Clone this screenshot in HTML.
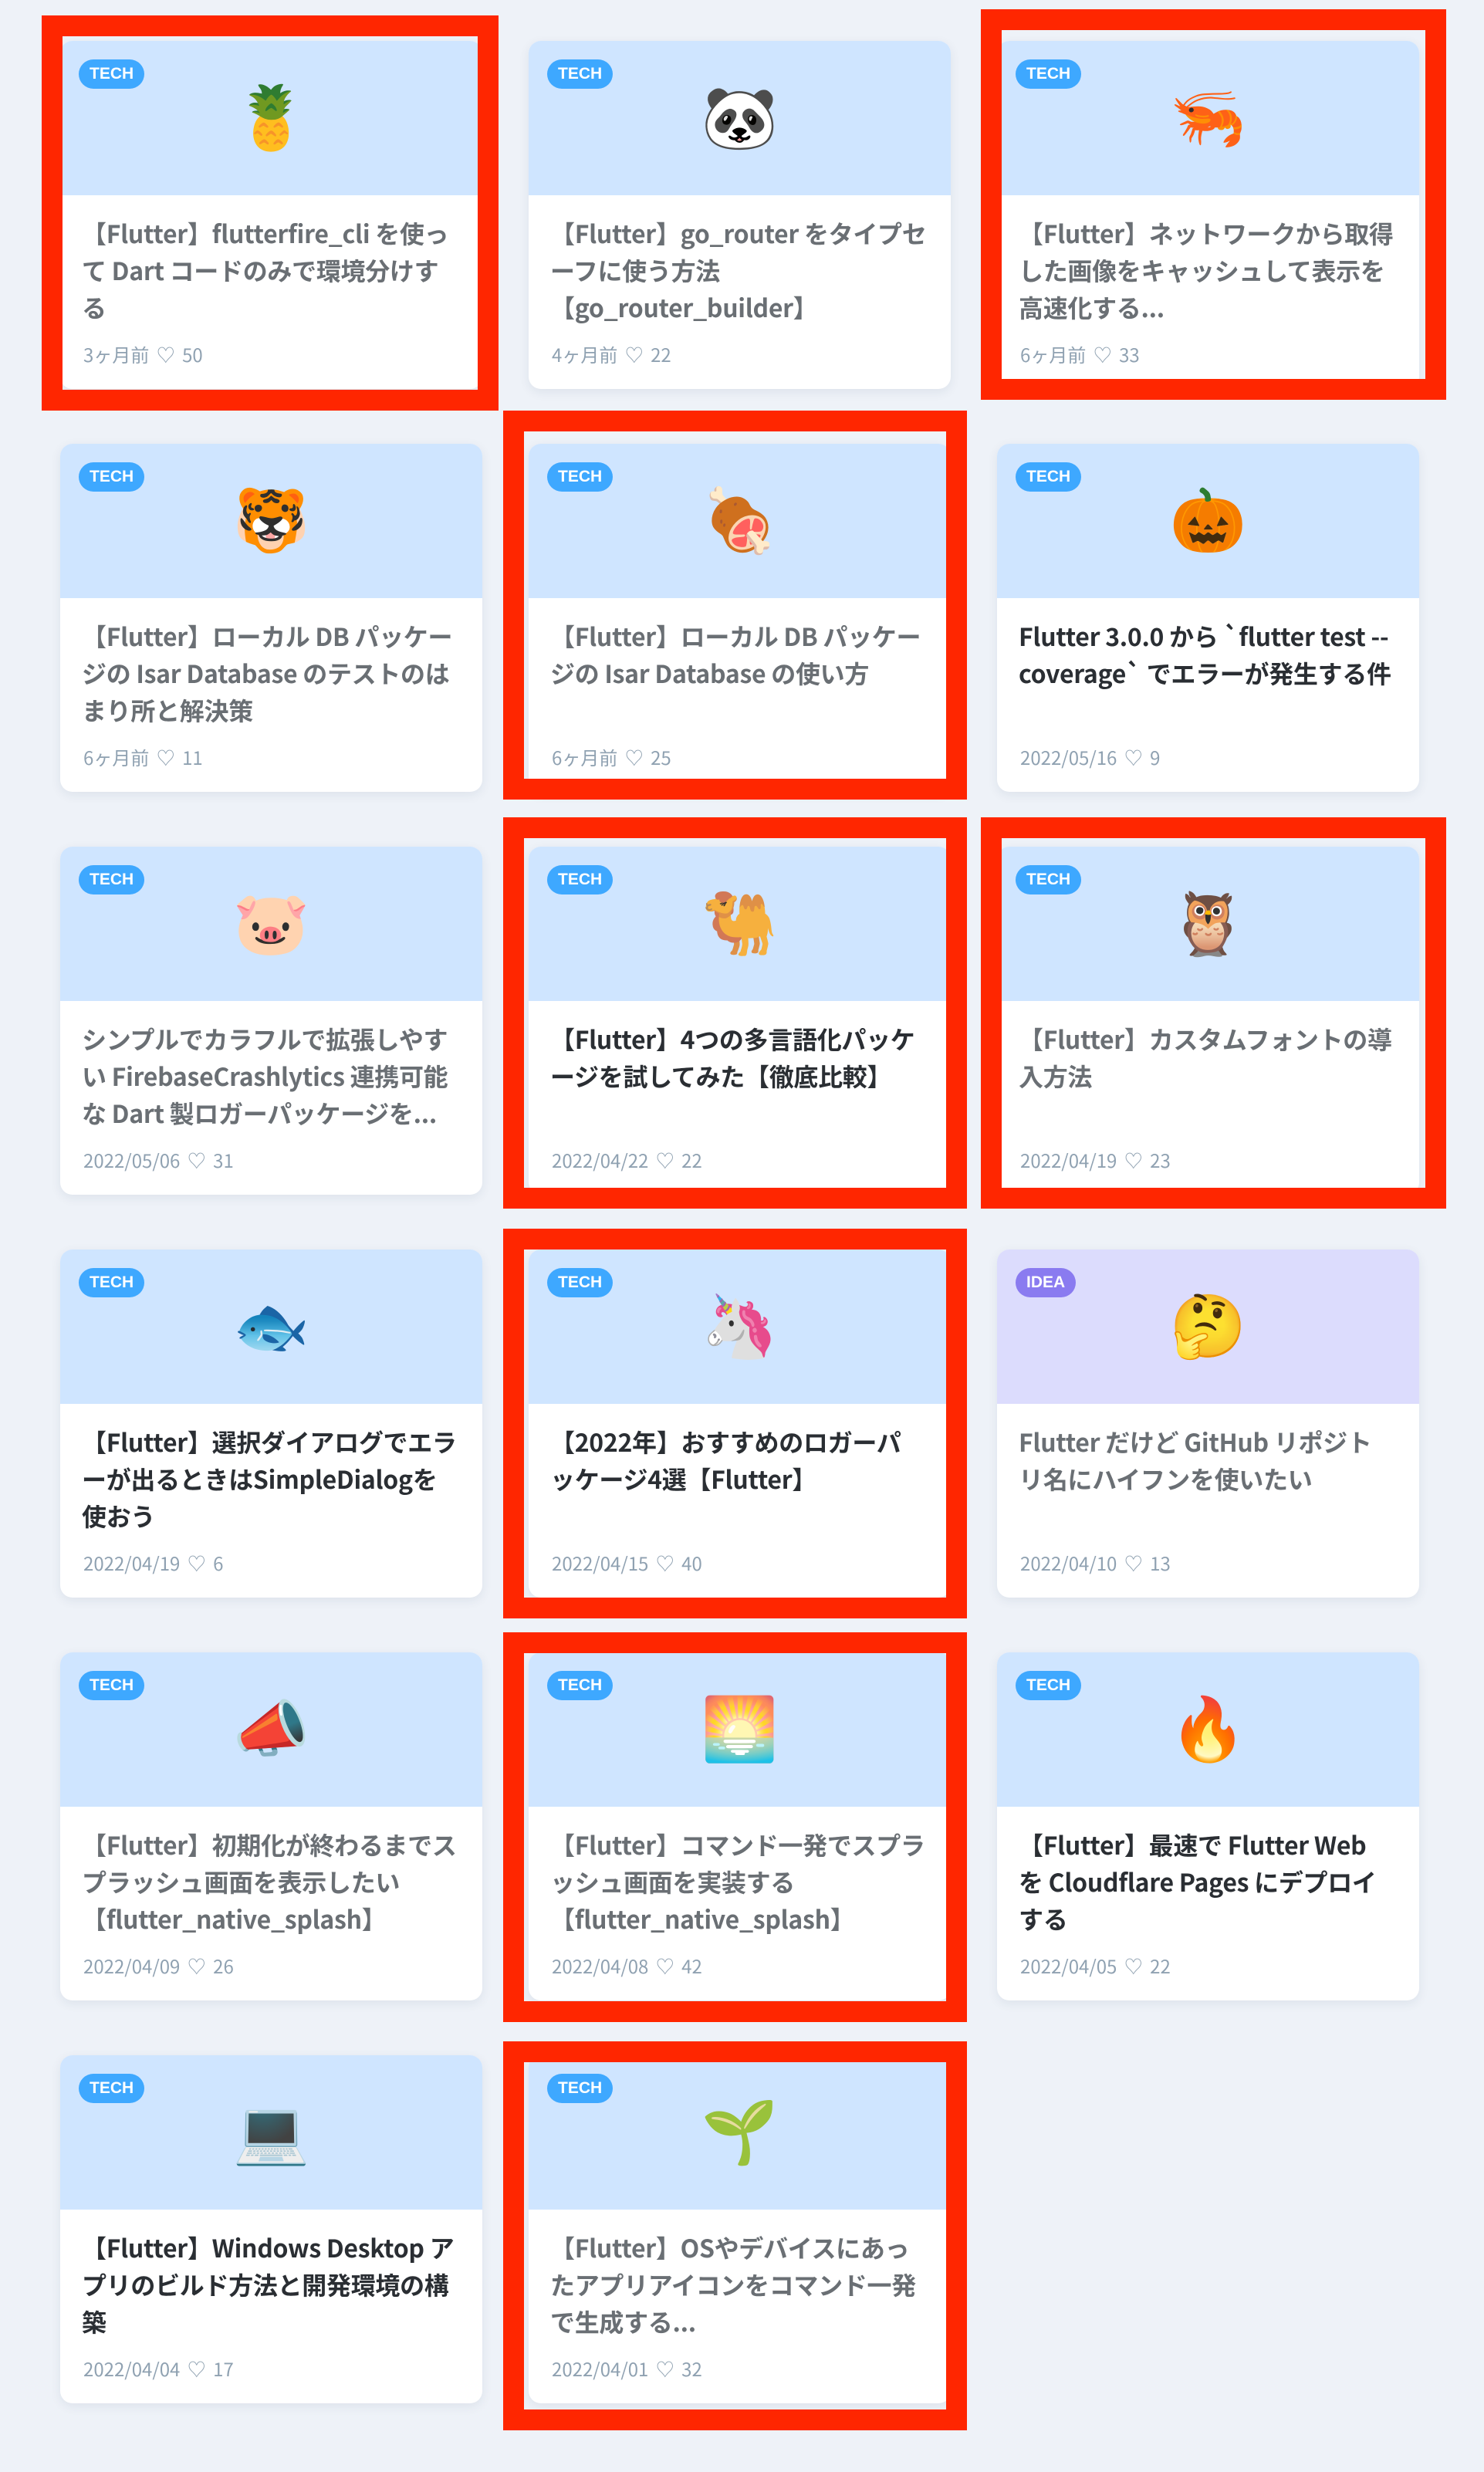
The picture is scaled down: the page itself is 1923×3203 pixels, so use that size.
<!DOCTYPE html>
<html><head><meta charset="utf-8">
<style>
*{box-sizing:border-box;margin:0;padding:0}
html,body{width:1923px;height:3203px;background:#eef2f8;overflow:hidden}
body{position:relative;font-family:"Liberation Sans","Noto Sans CJK JP",sans-serif}
.card{position:absolute;width:547px;height:451px;background:#fff;border-radius:16px;overflow:hidden;box-shadow:0 4px 14px rgba(30,50,90,.08)}
.hd{height:200px;background:#cfe5ff;position:relative;display:flex;align-items:center;justify-content:center;font-size:80px;line-height:1;font-family:"Noto Color Emoji","DejaVu Sans",sans-serif}
.idea .hd{background:#dcdcfd}
.bd{position:absolute;left:24px;top:24px;height:38px;padding:0 14px;border-radius:19px;background:#3ea8ff;color:#fff;font:bold 21px/38px "Liberation Sans",sans-serif;letter-spacing:0}
.idea .bd{background:#8a7bf0}
.t{padding:25px 10px 0 28px;font-family:"Noto Sans CJK JP",sans-serif;font-weight:bold;font-size:32px;line-height:48px;color:#6a6f74;white-space:nowrap;overflow:hidden;letter-spacing:-0.3px}
.dk .t{color:#2a2e33}
.m{position:absolute;left:30px;top:390px;font-family:"Noto Sans CJK JP",sans-serif;font-size:24px;color:#8fa1b1;line-height:32px;word-spacing:4px}
.red{position:absolute;border:27px solid #ff2600;z-index:5}
</style></head><body>

<div class="card" style="left:78px;top:53px"><div class="hd">🍍<span class="bd">TECH</span></div><div class="t">【Flutter】flutterfire_cli を使っ<br>て Dart コードのみで環境分けす<br>る</div><div class="m">3ヶ月前 ♡ 50</div></div>
<div class="card" style="left:685px;top:53px"><div class="hd">🐼<span class="bd">TECH</span></div><div class="t">【Flutter】go_router をタイプセ<br>ーフに使う方法<br>【go_router_builder】</div><div class="m">4ヶ月前 ♡ 22</div></div>
<div class="card" style="left:1292px;top:53px"><div class="hd">🦐<span class="bd">TECH</span></div><div class="t">【Flutter】ネットワークから取得<br>した画像をキャッシュして表示を<br>高速化する...</div><div class="m">6ヶ月前 ♡ 33</div></div>

<div class="card" style="left:78px;top:575px"><div class="hd">🐯<span class="bd">TECH</span></div><div class="t">【Flutter】ローカル DB パッケー<br>ジの Isar Database のテストのは<br>まり所と解決策</div><div class="m">6ヶ月前 ♡ 11</div></div>
<div class="card" style="left:685px;top:575px"><div class="hd">🍖<span class="bd">TECH</span></div><div class="t">【Flutter】ローカル DB パッケー<br>ジの Isar Database の使い方</div><div class="m">6ヶ月前 ♡ 25</div></div>
<div class="card dk" style="left:1292px;top:575px"><div class="hd">🎃<span class="bd">TECH</span></div><div class="t">Flutter 3.0.0 から `flutter test --<br>coverage` でエラーが発生する件</div><div class="m">2022/05/16 ♡ 9</div></div>

<div class="card" style="left:78px;top:1097px"><div class="hd">🐷<span class="bd">TECH</span></div><div class="t">シンプルでカラフルで拡張しやす<br>い FirebaseCrashlytics 連携可能<br>な Dart 製ロガーパッケージを...</div><div class="m">2022/05/06 ♡ 31</div></div>
<div class="card dk" style="left:685px;top:1097px"><div class="hd">🐫<span class="bd">TECH</span></div><div class="t">【Flutter】4つの多言語化パッケ<br>ージを試してみた【徹底比較】</div><div class="m">2022/04/22 ♡ 22</div></div>
<div class="card" style="left:1292px;top:1097px"><div class="hd">🦉<span class="bd">TECH</span></div><div class="t">【Flutter】カスタムフォントの導<br>入方法</div><div class="m">2022/04/19 ♡ 23</div></div>

<div class="card dk" style="left:78px;top:1619px"><div class="hd">🐟<span class="bd">TECH</span></div><div class="t">【Flutter】選択ダイアログでエラ<br>ーが出るときはSimpleDialogを<br>使おう</div><div class="m">2022/04/19 ♡ 6</div></div>
<div class="card dk" style="left:685px;top:1619px"><div class="hd">🦄<span class="bd">TECH</span></div><div class="t">【2022年】おすすめのロガーパ<br>ッケージ4選【Flutter】</div><div class="m">2022/04/15 ♡ 40</div></div>
<div class="card idea" style="left:1292px;top:1619px"><div class="hd">🤔<span class="bd">IDEA</span></div><div class="t">Flutter だけど GitHub リポジト<br>リ名にハイフンを使いたい</div><div class="m">2022/04/10 ♡ 13</div></div>

<div class="card" style="left:78px;top:2141px"><div class="hd">📣<span class="bd">TECH</span></div><div class="t">【Flutter】初期化が終わるまでス<br>プラッシュ画面を表示したい<br>【flutter_native_splash】</div><div class="m">2022/04/09 ♡ 26</div></div>
<div class="card" style="left:685px;top:2141px"><div class="hd">🌅<span class="bd">TECH</span></div><div class="t">【Flutter】コマンド一発でスプラ<br>ッシュ画面を実装する<br>【flutter_native_splash】</div><div class="m">2022/04/08 ♡ 42</div></div>
<div class="card dk" style="left:1292px;top:2141px"><div class="hd">🔥<span class="bd">TECH</span></div><div class="t">【Flutter】最速で Flutter Web<br>を Cloudflare Pages にデプロイ<br>する</div><div class="m">2022/04/05 ♡ 22</div></div>

<div class="card dk" style="left:78px;top:2663px"><div class="hd">💻<span class="bd">TECH</span></div><div class="t">【Flutter】Windows Desktop ア<br>プリのビルド方法と開発環境の構<br>築</div><div class="m">2022/04/04 ♡ 17</div></div>
<div class="card" style="left:685px;top:2663px"><div class="hd">🌱<span class="bd">TECH</span></div><div class="t">【Flutter】OSやデバイスにあっ<br>たアプリアイコンをコマンド一発<br>で生成する...</div><div class="m">2022/04/01 ♡ 32</div></div>

<div class="red" style="left:54px;top:20px;width:592px;height:512px"></div>
<div class="red" style="left:1271px;top:12px;width:603px;height:506px"></div>
<div class="red" style="left:652px;top:532px;width:601px;height:504px"></div>
<div class="red" style="left:652px;top:1059px;width:601px;height:507px"></div>
<div class="red" style="left:1271px;top:1059px;width:603px;height:507px"></div>
<div class="red" style="left:652px;top:1592px;width:601px;height:505px"></div>
<div class="red" style="left:652px;top:2115px;width:601px;height:505px"></div>
<div class="red" style="left:652px;top:2645px;width:601px;height:504px"></div>
</body></html>
